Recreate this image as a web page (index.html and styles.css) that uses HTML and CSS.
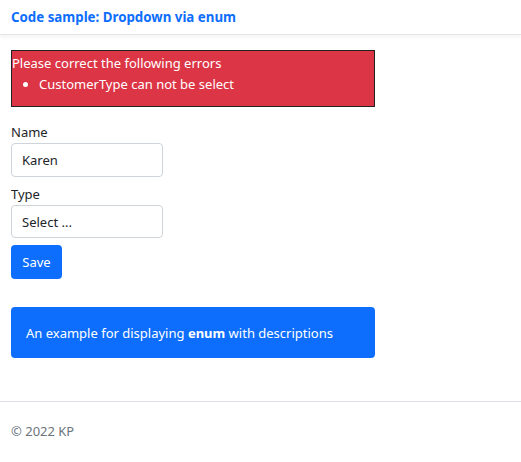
FILE: index.html
```html
<!DOCTYPE html>
<html>
<head>
<meta charset="utf-8">
<link rel="stylesheet" href="styles.css">
</head>
<body>
<header class="topbar">
  <span class="brand">Code sample: Dropdown via enum</span>
</header>
<main class="content">
  <div class="errors">
    <div class="errors-title">Please correct the following errors</div>
    <ul class="errors-list">
      <li>CustomerType can not be select</li>
    </ul>
  </div>
  <form class="form">
    <label class="label">Name</label>
    <input class="control" type="text" value="Karen">
    <label class="label">Type</label>
    <div class="control select">Select ...</div>
    <button class="btn" type="button">Save</button>
  </form>
  <div class="info"><span>An example for displaying <b>enum</b> with descriptions</span></div>
</main>
<footer class="footer">© 2022 KP</footer>
</body>
</html>
```

FILE: styles.css
```css
* { box-sizing: border-box; }
body {
  margin: 0;
  font-family: "Noto Sans", "Open Sans", sans-serif;
  font-size: 13px;
  color: #212529;
  background: #fff;
}
.topbar {
  height: 35px;
  padding: 0 11px;
  display: flex;
  align-items: center;
  border-bottom: 1px solid #e5e5e5;
  box-shadow: 0 2px 4px rgba(0,0,0,0.05);
}
.brand {
  color: #0d6efd;
  font-weight: 700;
  font-size: 13.3px;
}
.content {
  padding: 15px 11px 0;
}
.errors {
  width: 364px;
  height: 57px;
  background: #dc3545;
  border: 1px solid #222;
  color: #fff;
  padding-top: 3px;
}
.errors-title { line-height: 18px; }
.errors-list {
  margin: 3px 0 0;
  padding-left: 27px;
  line-height: 18px;
}
.form {
  display: flex;
  flex-direction: column;
  align-items: flex-start;
  margin-top: 16px;
}
.label {
  line-height: 18px;
  margin-bottom: 2px;
  margin-top: 1px;
}
.label:first-child { margin-top: 0; }
.control {
  width: 152px;
  height: 34px;
  border: 1px solid #ced4da;
  border-radius: 4px;
  padding: 0 10px;
  font: inherit;
  color: #212529;
  margin-bottom: 7px;
  display: flex;
  align-items: center;
}
.select { height: 33px; margin-bottom: 7px; }
.btn {
  width: 51px;
  height: 34px;
  background: #0d6efd;
  border: none;
  border-radius: 4px;
  color: #fff;
  font: inherit;
  padding: 0;
}
.info {
  margin-top: 28px;
  width: 364px;
  height: 51px;
  background: #0d6efd;
  border-radius: 4px;
  color: #fff;
  padding: 0 15px;
  display: flex;
  align-items: center;
}
.info b { font-weight: 700; }
.footer {
  margin-top: 43px;
  border-top: 1px solid #dee2e6;
  padding: 20px 11px;
  color: #6c757d;
}
```
